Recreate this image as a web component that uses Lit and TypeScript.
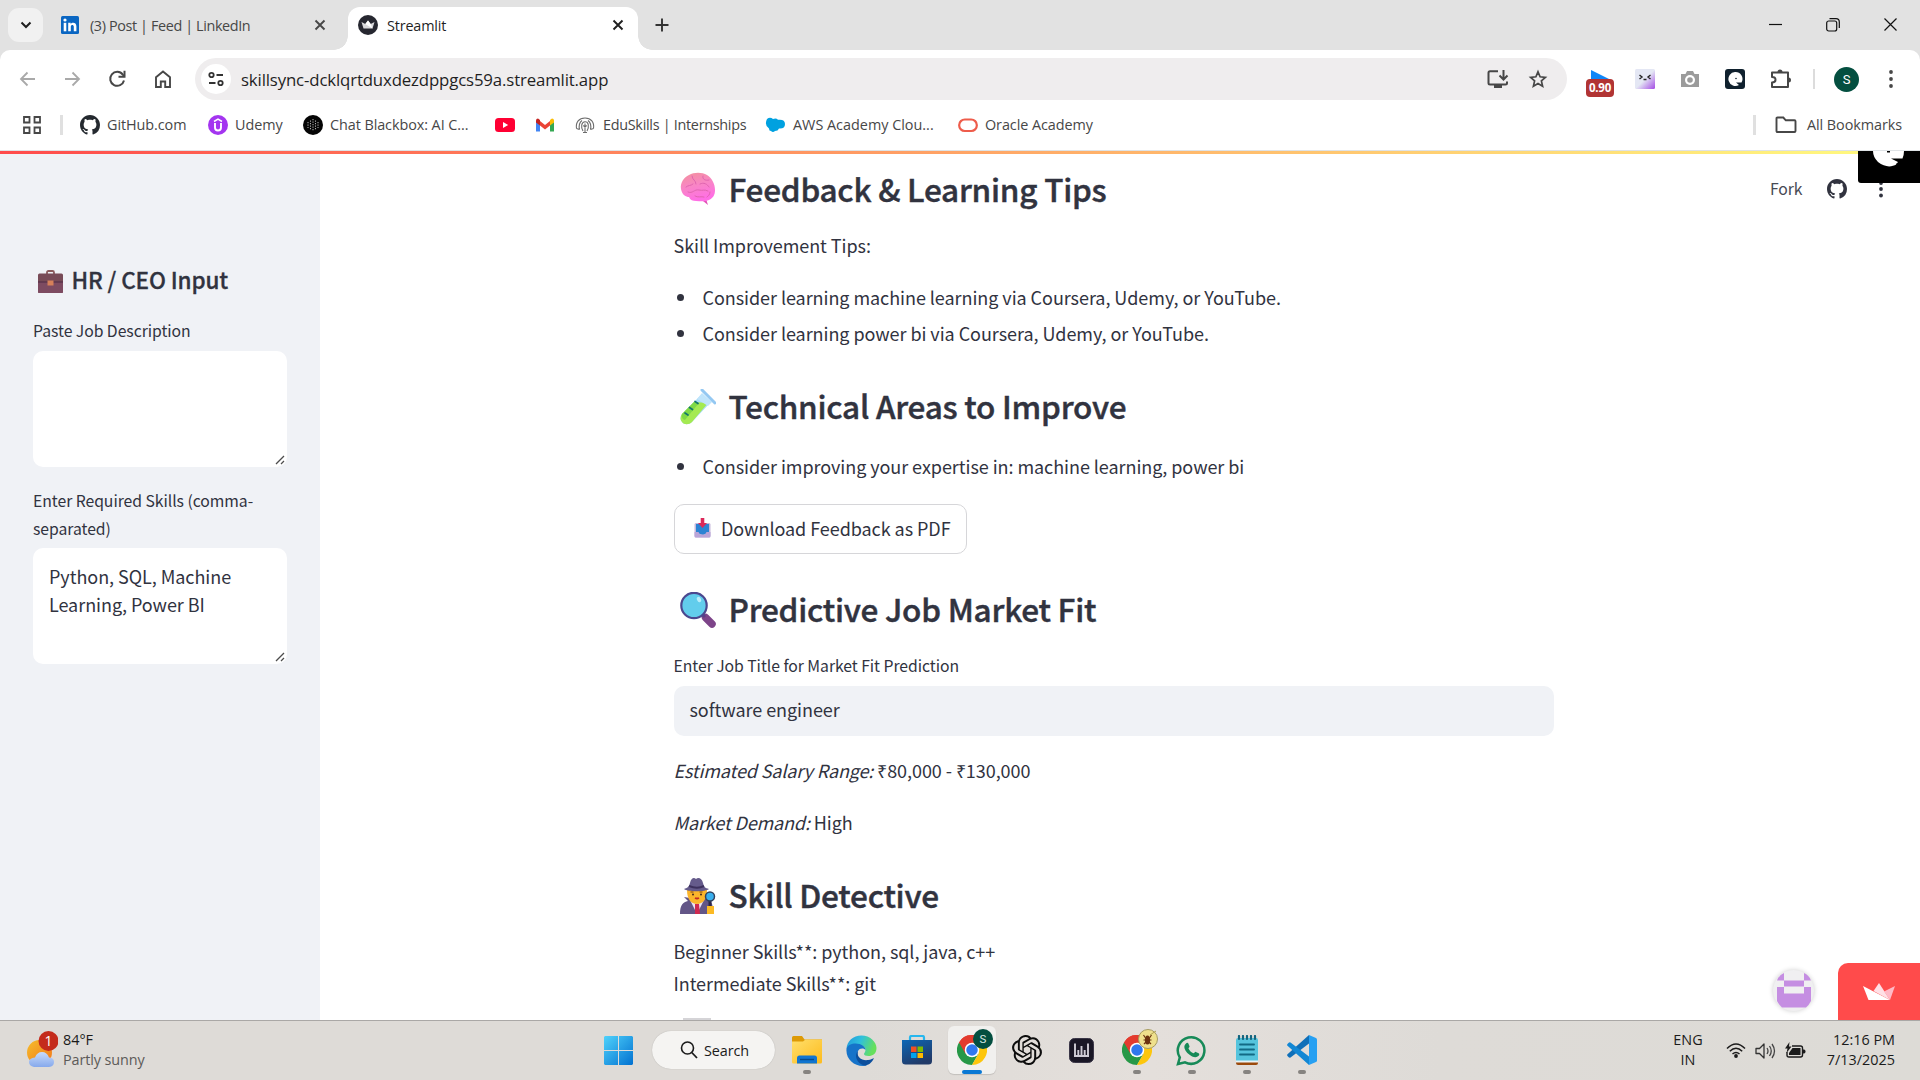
import { LitElement, html, svg, css } from 'lit';
import { customElement } from 'lit/decorators.js';

const icon = (w: number, h: number, box: string, body: unknown) =>
  html`<svg class="ic" width=${w} height=${h} viewBox=${box} fill="none">${body}</svg>`;

const OCTOCAT =
  'M8 0C3.58 0 0 3.58 0 8c0 3.54 2.29 6.53 5.47 7.59.4.07.55-.17.55-.38 0-.19-.01-.82-.01-1.49-2.01.37-2.53-.49-2.69-.94-.09-.23-.48-.94-.82-1.13-.28-.15-.68-.52-.01-.53.63-.01 1.08.58 1.23.82.72 1.21 1.87.87 2.33.66.07-.52.28-.87.51-1.07-1.78-.2-3.64-.89-3.64-3.95 0-.87.31-1.59.82-2.15-.08-.2-.36-1.02.08-2.12 0 0 .67-.21 2.2.82.64-.18 1.32-.27 2-.27s1.36.09 2 .27c1.53-1.04 2.2-.82 2.2-.82.44 1.1.16 1.92.08 2.12.51.56.82 1.27.82 2.15 0 3.07-1.87 3.75-3.65 3.95.29.25.54.73.54 1.48 0 1.07-.01 1.93-.01 2.2 0 .21.15.46.55.38A8.01 8.01 0 0 0 16 8c0-4.42-3.58-8-8-8z';
const OPENAI =
  'M22.2819 9.8211a5.9847 5.9847 0 0 0-.5157-4.9108 6.0462 6.0462 0 0 0-6.5098-2.9A6.0651 6.0651 0 0 0 4.9807 4.1818a5.9847 5.9847 0 0 0-3.9977 2.9 6.0462 6.0462 0 0 0 .7427 7.0966 5.98 5.98 0 0 0 .511 4.9107 6.051 6.051 0 0 0 6.5146 2.9001A5.9847 5.9847 0 0 0 13.2599 24a6.0557 6.0557 0 0 0 5.7718-4.2058 5.9894 5.9894 0 0 0 3.9977-2.9001 6.0557 6.0557 0 0 0-.7475-7.0729zm-9.022 12.6081a4.4755 4.4755 0 0 1-2.8764-1.0408l.1419-.0804 4.7783-2.7582a.7948.7948 0 0 0 .3927-.6813v-6.7369l2.02 1.1686a.071.071 0 0 1 .038.052v5.5826a4.504 4.504 0 0 1-4.4945 4.4944zm-9.6607-4.1254a4.4708 4.4708 0 0 1-.5346-3.0137l.142.0852 4.783 2.7582a.7712.7712 0 0 0 .7806 0l5.8428-3.3685v2.3324a.0804.0804 0 0 1-.0332.0615L9.74 19.9502a4.4992 4.4992 0 0 1-6.1408-1.6464zM2.3408 7.8956a4.485 4.485 0 0 1 2.3655-1.9728V11.6a.7664.7664 0 0 0 .3879.6765l5.8144 3.3543-2.0201 1.1685a.0757.0757 0 0 1-.071 0l-4.8303-2.7865A4.504 4.504 0 0 1 2.3408 7.872zm16.5963 3.8558L13.1038 8.364 15.1192 7.2a.0757.0757 0 0 1 .071 0l4.8303 2.7913a4.4944 4.4944 0 0 1-.6765 8.1042v-5.6772a.79.79 0 0 0-.407-.667zm2.0107-3.0231l-.142-.0852-4.7735-2.7818a.7759.7759 0 0 0-.7854 0L9.409 9.2297V6.8974a.0662.0662 0 0 1 .0284-.0615l4.8303-2.7866a4.4992 4.4992 0 0 1 6.6802 4.66zM8.3065 12.863l-2.02-1.1638a.0804.0804 0 0 1-.038-.0567V6.0742a4.4992 4.4992 0 0 1 7.3757-3.4537l-.142.0805L8.704 5.459a.7948.7948 0 0 0-.3927.6813zm1.0976-2.3654l2.602-1.4998 2.6069 1.4998v2.9994l-2.5974 1.4997-2.6067-1.4997Z';

const close = (c: string) => icon(12, 12, '0 0 12 12', svg`<path d="M1.5 1.5l9 9M10.5 1.5l-9 9" stroke=${c} stroke-width="1.9"/>`);

const github = (s: number, c: string) => icon(s, s, '0 0 16 16', svg`<path fill=${c} d=${OCTOCAT}/>`);

const chrome = () => icon(30, 30, '0 0 48 48', svg`
  <path d="M24 24L3.2 12A24 24 0 0 1 44.8 12z" fill="#e33b2e"/>
  <path d="M3.2 12A24 24 0 0 0 24 48L34.4 30 24 24z" fill="#279847"/>
  <path d="M44.8 12A24 24 0 0 1 24 48L34.4 30 24 12z" fill="#fdc60c"/>
  <path d="M3.2 12L13.6 30 24 24V12h20.8A24 24 0 0 0 3.2 12z" fill="#e33b2e"/>
  <circle cx="24" cy="24" r="11.6" fill="#fff"/><circle cx="24" cy="24" r="9.2" fill="#3078ee"/>`);

const brain = () => icon(36, 34, '0 0 36 34', svg`
  <defs><linearGradient id="br" x1="0" y1="0" x2=".3" y2="1"><stop offset="0" stop-color="#f3929c"/><stop offset=".5" stop-color="#f886c4"/><stop offset="1" stop-color="#ff6fe4"/></linearGradient></defs>
  <path d="M26 27l2 6-5-4z" fill="#e250b8"/>
  <path d="M1 17c-1-6 3-12 8-14C14 0 22 0 27 3c5 3 8 9 8 15 0 5-2 8-6 10-4 2-9 1-13 1-3 0-6-1-7-4-3 0-7-2-8-8z" fill="url(#br)"/>
  <path d="M6 15c2-2 5-1 7-3M12 4c0 4 4 4 4 8M23 4c-1 3 2 5 6 4M20 12c4-2 7 0 9 3M8 20c5 2 6-3 11-2 4 1 5-1 9 1M15 24c3 2 6 0 9 1M30 20c0 3-2 4-3 5" stroke="#e065b0" stroke-width="1" stroke-linecap="round"/>`);

const tube = () => icon(36, 36, '0 0 36 36', svg`
  <path d="M20 7l9 8-17 18c-3 3-8 3-10 0-2-2-2-5 0-8z" fill="#a9dcf7"/>
  <path d="M14 13l14 1L12 33c-3 3-8 3-10 0-2-2-2-5 0-8z" fill="#a4ea52"/>
  <path d="M14 13l5 1L5 31c-2 0-4-3-3-6z" fill="#7fd946"/>
  <path d="M22 4l10 9-4 4-11-7z" fill="#bfe4fb"/>
  <path d="M22 1l13 13" stroke="#94c8f2" stroke-width="3" stroke-linecap="round"/>
  <path d="M15 12.500l3 2M9.500 18.500l3 2M5 24l3 2" stroke="#14756d" stroke-width="1.700" stroke-linecap="round"/>`);

const magnifier = () => icon(36, 36, '0 0 36 36', svg`
  <path d="M25.500 25.500l6.500 6.500" stroke="#7d4489" stroke-width="7.500" stroke-linecap="round"/>
  <path d="M21 21l4 4" stroke="#5c3c86" stroke-width="3"/>
  <circle cx="14" cy="13.500" r="12.700" fill="#62cdec" stroke="#4b488f" stroke-width="2.200"/>
  <ellipse cx="19" cy="7.500" rx="2" ry="2.800" fill="#b9eefb" transform="rotate(-25 19 7.500)"/>`);

const detective = () => icon(36, 36, '0 0 36 36', svg`
  <path d="M0 36c0-9 3-12 8-13l-4-4 6 1h14l6 3c3 2 3 8 3 13z" fill="#635687"/>
  <path d="M10 22l7 14 7-14z" fill="#e9e3f4"/><path d="M15 26h4l1 10h-5z" fill="#cf2950"/>
  <path d="M7 12h20c0 9-4 14-10 14S7 21 7 12z" fill="#fbb52b"/>
  <path d="M4 11c3-1 5-2 6-6 1-5 4-6 6-4 2-2 6-1 7 4 1 4 2 5 6 6-3 3-22 3-25 0z" fill="#655b8b"/>
  <path d="M9 8c5 2 11 2 15 0" stroke="#3d315d" stroke-width="2"/>
  <path d="M10.500 14h3M19.500 14h3" stroke="#7b4516" stroke-width="1.200"/><circle cx="13" cy="16.500" r="1" fill="#43281e"/><circle cx="21" cy="16.500" r="1" fill="#43281e"/>
  <path d="M15 20q2 1 4 0" stroke="#c22a25" stroke-width="1.800"/>
  <path d="M30 22v7" stroke="#2e2848" stroke-width="3"/><circle cx="30" cy="18.500" r="4.500" fill="#39afee" stroke="#30415e" stroke-width="1.500"/>
  <path d="M27 28h7v8h-7z" fill="#fcba24"/>`);

const briefcase = () => icon(25, 24, '0 0 25 24', svg`
  <path d="M9 4V2.500q0-1.500 1.500-1.500h4q1.500 0 1.500 1.500V4" stroke="#8a5a5c" stroke-width="1.800"/>
  <rect x="0" y="3.500" width="25" height="19.500" rx="1.500" fill="#784b57"/><path d="M0 12h25v10q0 1-1 1H1q-1 0-1-1z" fill="#7d4b61"/>
  <path d="M0 12h25" stroke="#562f49" stroke-width="1.200"/><rect x="9.500" y="10.500" width="6" height="5" fill="#d6805a"/>`);

const inbox = () => icon(17, 20, '0 0 17 20', svg`
  <rect x=".5" y="5" width="16" height="14.500" rx="1.500" fill="#c7b9dc"/><path d="M2 6h13v9l-4 1-2 1-3-1-4-1z" fill="#2c83d3"/>
  <path d="M.5 14h4l1.500 2.500h5L12.500 14h4v4q0 1.500-1.500 1.500H2Q.5 19.500.5 18z" fill="#baa5d8"/>
  <path d="M6.700 0h3.600v5h2.700l-4.500 5L4 5h2.700z" fill="#dc2859"/>`);

const grip = () => icon(10, 10, '0 0 10 10', svg`<path d="M1 9l8-8M6 9l3-3" stroke="#4c4c4c" stroke-width="1.300"/>`);

@customElement('app-root')
export class AppRoot extends LitElement {
  static styles = css`
    :host { display: flex; flex-direction: column; width: 1920px; height: 1080px; overflow: hidden; background: #fff; font: 14.4px/20px 'Open Sans', sans-serif; color: #474747; white-space: nowrap; }
    * { box-sizing: border-box; }
    .ic { display: block; flex: none; }
    p, h1, h2, ul { margin: 0; padding: 0; }

    .tabs { display: flex; height: 50px; background: #e2e2e2; align-items: center; flex: none; }
    .tabsearch { width: 35px; height: 34px; margin-left: 8px; border-radius: 11px; background: #f1f1f1; display: grid; place-items: center; }
    .tab { display: flex; align-items: center; height: 43px; margin-top: 7px; }
    .tab .t { padding-top: 1px; }
    .tab.idle { width: 293px; padding: 0 10px 7px 18px; }
    .tab.idle .t { margin-left: 11px; width: 224px; letter-spacing: -.38px; }
    .tab.active { position: relative; width: 290px; margin-left: 12px; background: #fff; border-radius: 12px 12px 0 0; color: #1f1f1f; padding: 0 14px 7px 10px; }
    .tab.active .t { margin-left: 9px; width: 225px; letter-spacing: -.16px; }
    .tab.active::before, .tab.active::after { content: ''; position: absolute; bottom: 0; width: 14px; height: 14px; }
    .tab.active::before { left: -14px; background: radial-gradient(circle at 0 0, #e2e2e2 13.5px, #fff 14px); }
    .tab.active::after { right: -14px; background: radial-gradient(circle at 100% 0, #e2e2e2 13.5px, #fff 14px); }
    .plus { margin-left: 17px; }
    .win { margin-left: auto; display: flex; align-items: center; gap: 44px; padding-right: 23px; }
    .win .ic { margin-top: -1px; }

    .toolcap { background: #e2e2e2; flex: none; }
    .toolbar { display: flex; align-items: center; height: 58px; background: #fff; border-radius: 10px 10px 0 0; padding-left: 19px; }
    .nav { display: flex; gap: 26px; width: 176px; align-items: center; }
    .omni { display: flex; align-items: center; width: 1372px; height: 42px; border-radius: 21px; background: #efedee; padding: 0 19px 0 6px; }
    .site { width: 30px; height: 30px; border-radius: 50%; background: #fff; display: grid; place-items: center; }
    .url { flex: 1; margin-left: 10px; padding-top: 2px; font-size: 16.8px; letter-spacing: -.14px; color: #1f1f1f; }
    .omni .star { margin-left: 19px; }
    .ext { display: flex; align-items: center; flex: 1; }
    .ext > .ic { margin-left: 25px; }
    .ext > .ic:nth-of-type(1) { margin-left: 21px; }
    .ext .bar { margin: 0 19px 0 21px; }
    .ext > .ic:last-child { margin-left: 30px; }
    .speed { margin-left: 19px; display: flex; flex-direction: column; align-items: center; width: 28px; height: 27px; margin-top: 9px; }
    .speed b { background: #b13434; color: #fff; font: 700 11.5px/18px 'Open Sans', sans-serif; border-radius: 4px; width: 28px; text-align: center; letter-spacing: -.2px; }
    .bar { width: 2px; height: 20px; background: #dcdcdc; }
    .me { width: 25px; height: 25px; border-radius: 50%; background: #044f40; color: #fff; font: 13px/25px Roboto, sans-serif; text-align: center; }

    .marks { display: flex; align-items: center; height: 43px; flex: none; padding: 0 18px 8px 23px; border-bottom: 1px solid #dfe3e6; letter-spacing: -.07px; }
    .marks .bar { width: 3px; background: #e0e0e0; }
    .marks .lead { margin-left: 19px; }
    .mk { display: flex; align-items: center; gap: 7px; flex: none; }
    .mk .ic { width: 20px; }
    .m1 { width: 128px; margin-left: 17px; }
    .m2 { width: 95px; }
    .m3 { width: 192px; }
    .m4, .m5 { width: 40px; }
    .m6 { width: 190px; letter-spacing: -.29px; gap: 8px; }
    .m7 { width: 193px; letter-spacing: 0; gap: 8px; }
    .m8 { flex: 1; }
    .all { display: flex; align-items: center; gap: 10px; margin-left: 19px; }

    .app { position: relative; display: flex; flex: 1; min-height: 0; overflow: hidden; font-family: 'Noto Sans CJK SC', sans-serif; color: #31333f; }
    .rule { position: absolute; left: 0; top: 0; width: 100%; height: 3px; background: linear-gradient(90deg, #ff4b4b, #fffd80); }
    aside { width: 320px; background: #f0f2f6; padding: 113px 33px 0; }
    aside h1 { display: flex; gap: 8.5px; padding-left: 5px; font-weight: 500; font-size: 22.5px; line-height: 30px; letter-spacing: -.13px; -webkit-text-stroke: .3px #31333f; }
    aside h1 svg { margin-top: 6px; }
    .lab { font-size: 15.75px; line-height: 28px; letter-spacing: -.045px; white-space: normal; }
    aside .lab { margin-top: 23px; }
    aside .lab.two { margin-top: 20px; }
    .area { display: flex; width: 254px; height: 116px; margin-top: 6px; border-radius: 10px; background: #fff; padding: 14px 2px 2px 16px; font-size: 18px; line-height: 28px; letter-spacing: -.05px; }
    .area.b { margin-top: 5px; }
    .area span { flex: 1; white-space: pre-line; }
    .area .ic { align-self: flex-end; }

    main { margin-left: 354px; width: 880px; padding-top: 16px; display: flex; flex-direction: column; font-size: 18px; line-height: 32px; letter-spacing: -.055px; }
    main h2 { display: flex; gap: 12.5px; padding-left: 6px; font-weight: 500; font-size: 31.5px; line-height: 42px; letter-spacing: -.23px; -webkit-text-stroke: .45px #31333f; }
    main h2 svg { margin-top: 5px; }
    main p, li { text-indent: -.5px; }
    .p1 { margin-top: 20px; }
    ul { list-style: none; }
    li { display: flex; align-items: center; line-height: 36px; }
    li::before { content: ''; width: 7px; height: 7px; border-radius: 50%; background: #31333f; margin: 0 19px 0 3px; }
    .l1 { margin-top: 18px; }
    .l2 { margin-top: 22px; }
    .h2 { margin-top: 33px; }
    .btn { display: flex; align-items: center; gap: 10px; width: 293px; height: 50px; margin-top: 20px; border: 1px solid #d6d6d9; border-radius: 10px; padding: 0 0 3px 19px; }
    .h3 { margin-top: 33px; }
    main .lab { margin-top: 23px; }
    .field { height: 50px; margin-top: 6px; border-radius: 10px; background: #f0f2f6; padding-left: 15.5px; line-height: 46px; }
    .p2 { margin-top: 18px; }
    .p3 { margin-top: 20px; }
    .h4 { margin-top: 35px; }
    em { letter-spacing: -.14px; }
    .next { width: 28px; height: 2px; background: #d5d4d7; margin: 19px 0 0 9px; flex: none; }
    .fork { display: flex; align-items: center; margin: 26px 0 0 216px; height: 24px; font-size: 15.75px; letter-spacing: -.15px; gap: 25px; color: #484a55; }
    .fork .dots { margin-left: 7px; }
    .patch { position: absolute; right: 0; top: 0; }
    .host { position: absolute; right: 0; bottom: 0; display: flex; align-items: center; }
    .bubble { width: 41px; height: 41px; border-radius: 50%; background: #f0eff1; box-shadow: 0 0 5px #0003; margin-right: 24px; margin-bottom: 2px; display: grid; place-items: center; }
    .crown { width: 82px; height: 57px; background: #ff4b4b; border-radius: 10px 0 0 0; display: grid; place-items: center; }

    .task { display: flex; flex: none; height: 60px; border-top: 1px solid #aaa8a6; background: linear-gradient(90deg, #dedbd7 0, #dedbd7 45%, #e4dfdb 60%, #dedbd7 75%, #dddbd6); color: #1b1b1b; align-items: center; }
    .weather { display: flex; width: 604px; padding-left: 26px; gap: 5px; padding-bottom: 1px; }
    .weather div { line-height: 20px; margin-top: -1px; }
    .weather span { display: block; color: #5c5a58; letter-spacing: -.1px; }
    .search { display: flex; align-items: center; gap: 6px; width: 123px; height: 38px; margin-left: 19px; border-radius: 19px; background: #f5f4f2; padding-left: 28px; box-shadow: 0 0 1px #0004; margin: -1px 4px 0 19px; letter-spacing: -.1px; }
    .search span { padding-top: 1px; }
    .cell { position: relative; width: 55px; height: 59px; display: grid; place-items: center; padding-bottom: 1px; }
    .cell.on::before { content: ''; position: absolute; left: 4px; top: 5px; width: 48px; height: 48px; border-radius: 6px; background: #f1f0ee; box-shadow: 0 1px 1px #0002; }
    .cell .ic { position: relative; }
    .cell.run::after, .cell.on::after { content: ''; position: absolute; left: 24px; top: 49px; width: 8px; height: 4px; border-radius: 2px; background: #868380; }
    .cell.on::after { left: 18px; width: 20px; background: #0a78d4; }
    .cell .bd { position: absolute; left: 29px; top: 8px; }
    .tray { margin-left: auto; display: flex; align-items: center; padding-right: 25px; text-align: right; line-height: 20px; }
    .lang { text-align: center; width: 30px; margin: -1px 23px 0 0; }
    .clock { width: 74px; margin: -2px 0 0 15px; }
    .gap { width: 9px; }
  `;

  private tabs() {
    return html`<div class="tabs">
      <div class="tabsearch">${icon(12, 8, '0 0 12 8', svg`<path d="M1.500 1.500L6 6l4.500-4.500" stroke="#1f1f1f" stroke-width="2"/>`)}</div>
      <div class="tab idle">${icon(18, 18, '0 0 18 18', svg`<rect width="18" height="18" rx="1.500" fill="#0a66c2"/><rect x="2.700" y="6.800" width="2.600" height="8.500" fill="#fff"/><circle cx="4" cy="4" r="1.600" fill="#fff"/><path d="M7.200 15.300V6.800h2.500v1.200c1-1.900 5.700-2.200 5.700 2.200v5.100h-2.600v-4.500c0-2.500-3-2.300-3 0v4.500z" fill="#fff"/>`)}
        <span class="t">(3) Post | Feed | LinkedIn</span>${close('#474747')}</div>
      <div class="tab active">${icon(20, 20, '0 0 20 20', svg`<circle cx="10" cy="10" r="10" fill="#262730"/><path d="M3.500 7l3.800 2L10 5.500 12.700 9l3.800-2-2 6.500h-9z" fill="#d9d9dc"/><path d="M10 5.500L12.700 9l1.800 4.500L7.300 9z" fill="#fff"/>`)}
        <span class="t">Streamlit</span>${close('#1f1f1f')}</div>
      <div class="plus">${icon(14, 14, '0 0 14 14', svg`<path d="M7 .500v13M.500 7h13" stroke="#333" stroke-width="1.900"/>`)}</div>
      <div class="win">
        ${icon(13, 13, '0 0 13 13', svg`<path d="M0 6.500h13" stroke="#111" stroke-width="1.200"/>`)}
        ${icon(14, 14, '0 0 14 14', svg`<rect x=".700" y="3" width="10" height="10" rx="2" stroke="#111" stroke-width="1.200"/><path d="M3.500.700H10Q13.300.700 13.300 4v6" stroke="#111" stroke-width="1.200"/>`)}
        ${icon(13, 13, '0 0 13 13', svg`<path d="M.500.500l12 12M12.500.500l-12 12" stroke="#111" stroke-width="1.200"/>`)}
      </div></div>`;
  }

  private toolbar() {
    return html`<div class="toolcap"><div class="toolbar">
      <div class="nav">
        ${icon(18, 16, '0 0 18 16', svg`<path d="M16 8H2.500M8.500 1.500L2 8l6.500 6.500" stroke="#a9a9a9" stroke-width="1.800"/>`)}
        ${icon(18, 16, '0 0 18 16', svg`<path d="M2 8h13.500M9.500 1.500L16 8l-6.500 6.500" stroke="#a9a9a9" stroke-width="1.800"/>`)}
        ${icon(20, 20, '0 0 20 20', svg`<path d="M17 11.500A7 7 0 1 1 15.800 5.600L17.500 7.500" stroke="#474747" stroke-width="2"/><path d="M17.500 1.700v6h-6" stroke="#474747" stroke-width="2"/>`)}
        ${icon(20, 20, '0 0 20 20', svg`<path d="M3 8.200L10 2.500l7 5.700V18h-4.800v-5.500H7.800V18H3z" stroke="#474747" stroke-width="1.900"/>`)}
      </div>
      <div class="omni">
        <div class="site">${icon(16, 16, '0 0 16 16', svg`<circle cx="3.500" cy="4" r="2.200" stroke="#333" stroke-width="1.800"/><path d="M8.500 4H15M1 12h6.500" stroke="#333" stroke-width="1.800"/><circle cx="12.500" cy="12" r="2.200" stroke="#333" stroke-width="1.800"/>`)}</div>
        <span class="url">skillsync-dcklqrtduxdezdppgcs59a.streamlit.app</span>
        ${icon(22, 20, '0 0 22 20', svg`<path d="M11 2.200H3Q1.500 2.200 1.500 3.700V14q0 1.500 1.500 1.500h15.500q1.500 0 1.500-1.500v-1.500" stroke="#474747" stroke-width="2"/><path d="M7 17.500h8" stroke="#474747" stroke-width="3"/><path d="M16.500 1v9M12.500 6.500l4 4 4-4" stroke="#474747" stroke-width="2"/>`)}
        <span class="star">${icon(20, 20, '0 0 20 20', svg`<path d="M10 2.800l2.100 5 5.300.5-4 3.600 1.200 5.300L10 14.400l-4.600 2.800 1.200-5.300-4-3.600 5.300-.5z" stroke="#474747" stroke-width="1.700"/>`)}</span>
      </div>
      <div class="ext">
        <div class="speed">${icon(18, 9, '0 0 18 9', svg`<path d="M0 0l18 9H0z" fill="#0f87f8"/>`)}<b>0.90</b></div>
        ${icon(20, 20, '0 0 20 20', svg`<defs><linearGradient id="pu" x1="0" y1="0" x2="1" y2="1"><stop offset=".5" stop-color="#e4e7f4"/><stop offset="1" stop-color="#a44be4"/></linearGradient></defs><rect width="20" height="20" rx="1.500" fill="url(#pu)"/><path d="M4.500 6l2.500 2-2.500 2M15.500 6L13 8l2.500 2M8.500 10.500h3" stroke="#222" stroke-width="1.400"/>`)}
        ${icon(20, 20, '0 0 20 20', svg`<path d="M1 5h4.500L7 2h6l1.500 3H19v13H1z" fill="#9b9b9b"/><circle cx="10" cy="11" r="5" fill="#fff"/><circle cx="10" cy="11" r="2.800" fill="#9b9b9b"/>`)}
        ${icon(20, 20, '0 0 20 20', svg`<rect width="20" height="20" rx="3" fill="#10212e"/><path d="M10 3a7 7 0 1 0 4 13l-3-2.500h5.500A7 7 0 0 0 10 3z" fill="#fff"/><circle cx="11" cy="9.500" r=".8" fill="#10212e"/>`)}
        ${icon(22, 22, '0 0 22 22', svg`<path d="M2 4.500h16v14.500H2v-4.500q3.500 0 3.500-2.800T2 9z" stroke="#474747" stroke-width="2" stroke-linejoin="round"/><path d="M7.500 4a2.500 2.500 0 0 1 5 0M18.500 9.500a2.500 2.500 0 0 1 0 5" fill="#474747"/>`)}
        <i class="bar"></i><div class="me">S</div>
        ${icon(4, 18, '0 0 4 18', svg`<circle cx="2" cy="2" r="1.900" fill="#474747"/><circle cx="2" cy="9" r="1.900" fill="#474747"/><circle cx="2" cy="16" r="1.900" fill="#474747"/>`)}
      </div></div></div>`;
  }

  private bookmarks() {
    return html`<div class="marks">
      ${icon(18, 18, '0 0 18 18', svg`<path d="M1 1h5.500v5.500H1zM11.500 1H17v5.500h-5.500zM1 11.500h5.500V17H1zM11.500 11.500H17V17h-5.500z" stroke="#474747" stroke-width="1.800"/>`)}
      <i class="bar lead"></i>
      <div class="mk m1">${github(20, '#24292f')}<span>GitHub.com</span></div>
      <div class="mk m2">${icon(20, 20, '0 0 20 20', svg`<circle cx="10" cy="10" r="10" fill="#a435f0"/><path d="M6 6.500l4-2.300 4 2.300" stroke="#fff" stroke-width="1.500"/><path d="M7 8v4.500q0 3 3 3t3-3V8" stroke="#fff" stroke-width="1.900"/>`)}<span>Udemy</span></div>
      <div class="mk m3">${icon(20, 20, '0 0 20 20', svg`<circle cx="10" cy="10" r="10" fill="#050505"/><path d="M10 4v12M7.500 5.500v9M12.500 5.500v9M5 7v6M15 7v6" stroke="#aaa" stroke-width="1.100" stroke-dasharray="1.200 1.300"/>`)}<span>Chat Blackbox: AI C...</span></div>
      <div class="mk m4">${icon(20, 20, '0 0 20 20', svg`<rect y="3" width="20" height="14" rx="3.500" fill="#ff0033"/><path d="M8 7l5.200 3L8 13z" fill="#fff"/>`)}</div>
      <div class="mk m5">${icon(20, 20, '0 0 20 20', svg`<path d="M1 5v11.500h4V9z" fill="#4285f4"/><path d="M19 5v11.500h-4V9z" fill="#34a853"/><path d="M5 6l5 4 5-4v4.500L10 14.500 5 10.500z" fill="#ea4335"/><path d="M1 5.500Q1 3.500 3 3.500L5 5v5.500L1 7.500z" fill="#c5221f"/><path d="M19 5.500q0-2-2-2L15 5v5.500l4-3z" fill="#fbbc04"/>`)}</div>
      <div class="mk m6">${icon(20, 20, '0 0 20 20', svg`<path d="M1.500 13.500C.5 7 4 3 10 3s9.500 4 8.500 10.500M4.500 14.500c-1-4.500 0-7 2.500-9M15.500 14.500c1-4.500 0-7-2.500-9M1.500 13.500l3 1M18.500 13.500l-3 1M8 16C5.500 11.500 6.500 7 10 6.800s4.500 4.700 2 9.200M10 8.500V17M8.300 10.500l1.700 1.500 1.700-1.500M8 17.500h4" stroke="#6c6c6c" stroke-width="1.100"/>`)}<span>EduSkills | Internships</span></div>
      <div class="mk m7">${icon(20, 20, '0 0 20 20', svg`<path d="M2 4q3-2.500 6 0 3-1.500 5 .8 7-.8 7 4.200 0 5-6 4.500-1 2.500-4 2.500-2 2-4 0Q4 16 4 13.500-1 10 2 4z" fill="#00a1e0"/>`)}<span>AWS Academy Clou...</span></div>
      <div class="mk m8">${icon(20, 20, '0 0 20 20', svg`<rect x="1.200" y="4.500" width="17.600" height="11.500" rx="5.600" stroke="#ee5c4b" stroke-width="2.200"/>`)}<span>Oracle Academy</span></div>
      <i class="bar"></i>
      <div class="all">${icon(22, 18, '0 0 22 18', svg`<path d="M1.500 2.500Q1.500 1.500 2.500 1.500h5.800l2.500 2.800h8.700q1 0 1 1v9.700q0 1-1 1h-17q-1 0-1-1z" stroke="#474747" stroke-width="1.900"/>`)}<span>All Bookmarks</span></div>
    </div>`;
  }

  private page() {
    return html`<div class="app">
      <aside>
        <h1>${briefcase()}<span>HR / CEO Input</span></h1>
        <p class="lab">Paste Job Description</p>
        <div class="area"><span></span>${grip()}</div>
        <p class="lab two">Enter Required Skills (comma-separated)</p>
        <div class="area b"><span>Python, SQL, Machine
Learning, Power BI</span>${grip()}</div>
      </aside>
      <main>
        <h2>${brain()}<span>Feedback &amp; Learning Tips</span></h2>
        <p class="p1">Skill Improvement Tips:</p>
        <ul class="l1"><li>Consider learning machine learning via Coursera, Udemy, or YouTube.</li><li>Consider learning power bi via Coursera, Udemy, or YouTube.</li></ul>
        <h2 class="h2">${tube()}<span>Technical Areas to Improve</span></h2>
        <ul class="l2"><li>Consider improving your expertise in: machine learning, power bi</li></ul>
        <div class="btn">${inbox()}<span>Download Feedback as PDF</span></div>
        <h2 class="h3">${magnifier()}<span>Predictive Job Market Fit</span></h2>
        <p class="lab">Enter Job Title for Market Fit Prediction</p>
        <div class="field">software engineer</div>
        <p class="p2"><em>Estimated Salary Range:</em> ₹80,000 - ₹130,000</p>
        <p class="p3"><em>Market Demand:</em> High</p>
        <h2 class="h4">${detective()}<span>Skill Detective</span></h2>
        <p class="p1">Beginner Skills**: python, sql, java, c++</p>
        <p>Intermediate Skills**: git</p>
        <div class="next"></div>
      </main>
      <div class="fork"><span>Fork</span>${github(20, '#31333f')}<span class="dots">${icon(4, 18, '0 0 4 18', svg`<circle cx="2" cy="3" r="1.900" fill="#31333f"/><circle cx="2" cy="9" r="1.900" fill="#31333f"/><circle cx="2" cy="15.500" r="1.900" fill="#31333f"/>`)}</span></div>
      <div class="rule"></div>
      <div class="patch">${icon(62, 32, '0 0 62 32', svg`<path d="M0 0h62v32H3q-3 0-3-3z" fill="#000"/><path d="M15 0h31q0 4-1.500 7.500H33l7 3.500q-1 1.500-2 1.800 1 1-3 2Q28 17 20 11q-5-5-5-11z" fill="#fff"/><path d="M29 0h3v1.500h-3z" fill="#000"/>`)}</div>
      <div class="host">
        <div class="bubble">${icon(34, 35, '0 0 34 35', svg`<path d="M0 7.500Q2 2 7 0v7.500zM34 7.500Q32 2 27 0v7.500zM7 7.500h20v6H7zM0 14h7v6.500h20V14h7v14q-2 4-5 6.500H5Q2 32 0 28z" fill="#c58ee2"/>`)}</div>
        <div class="crown">${icon(32, 18, '0 0 32 18', svg`<path d="M0 3l27 14H5.500z" fill="#fff"/><path d="M16 0l-5.500 8L27 17z" fill="#ffe0e6"/><path d="M32 3l-11 5.500 6 8.500z" fill="#ffb9c6"/>`)}</div>
      </div>
    </div>`;
  }

  private taskbar() {
    return html`<div class="task">
      <div class="weather">
        ${icon(32, 38, '0 0 32 38', svg`<defs><linearGradient id="sun" x1="0" y1="0" x2="1" y2="1"><stop offset="0" stop-color="#f6bd2c"/><stop offset="1" stop-color="#f2761b"/></linearGradient><linearGradient id="cl" x1="0" y1="0" x2="0" y2="1"><stop offset="0" stop-color="#c9dcfa"/><stop offset="1" stop-color="#86a9ec"/></linearGradient></defs><circle cx="13.500" cy="21.500" r="12.500" fill="url(#sun)"/><path d="M8 36q-5-1-5-5T9 26.500q2-5.500 7-5.500t7 5.500q5 0 5 4.500t-5 5z" fill="url(#cl)"/><circle cx="22.500" cy="10" r="10" fill="#c42b1c"/><text x="22.500" y="15" font-family="Open Sans" font-size="14" fill="#fff" text-anchor="middle">1</text>`)}
        <div>84°F<span>Partly sunny</span></div>
      </div>
      ${icon(29, 29, '0 0 29 29', svg`<defs><linearGradient id="w" x1="0" y1="0" x2="1" y2="1"><stop offset="0" stop-color="#4fd2fb"/><stop offset="1" stop-color="#0271d0"/></linearGradient></defs><path d="M1 0h13v14H0V1zM15 0h13l1 1v13H15zM0 15h14v14H1l-1-1zM15 15h14v13l-1 1H15z" fill="url(#w)"/>`)}
      <div class="search">${icon(18, 18, '0 0 18 18', svg`<circle cx="7.500" cy="7" r="6" stroke="#1b1b1b" stroke-width="1.600"/><path d="M11.800 11.500l5.200 5.500" stroke="#1b1b1b" stroke-width="1.800"/>`)}<span>Search</span></div>
      <div class="cell run">${icon(30, 28, '0 0 30 28', svg`<path d="M0 1.500Q0 0 1.500 0H10l2.500 3.500H30V14H0z" fill="#dd9a06"/><defs><linearGradient id="fo" x1="0" y1="0" x2="1" y2="1"><stop offset="0" stop-color="#ffdf6b"/><stop offset="1" stop-color="#fdbb1d"/></linearGradient></defs><path d="M0 5.500h11L13.500 3.500H30V26q0 1.500-1.500 1.500h-27Q0 27.500 0 26z" fill="url(#fo)"/><path d="M5 27.500V22q0-2.500 2.500-2.500h15Q25 19.500 25 22v5.500z" fill="#1175d0"/><path d="M8 23.500h14" stroke="#064a8c" stroke-width="1.400"/>`)}</div>
      <div class="cell">${icon(31, 31, '0 0 31 31', svg`<defs><linearGradient id="e1" x1="0" y1="0" x2="1" y2=".3"><stop offset="0" stop-color="#2196dc"/><stop offset=".5" stop-color="#2fc0dc"/><stop offset="1" stop-color="#66e05c"/></linearGradient></defs><path d="M.500 14C1 6 7 .500 15.500.500S30.500 7 30.500 13s-4 8-8 8c-3 0-4.500-1-4.500-2 0-1 1.500-2 1.500-4 0-3-3-5-7-5-5 0-10 1-12 4z" fill="url(#e1)"/><path d="M.500 14c1-4 5-5.500 9-5.500 6 0 10 3 10 6.500-1-2-6-2.500-7.500 1-2 5 2 12 9 14.500C10 33-.500 25 .500 14z" fill="#1673c9"/><path d="M12 16c-2 6 4 10 10 9 3-.3 5-1.500 6-2-2 5-6 7.500-10 7.500C10 28 8 20 12 16z" fill="#0c4f9d"/>`)}</div>
      <div class="cell">${icon(30, 30, '0 0 30 30', svg`<path d="M8 6V2.500Q8 1 9.500 1h11Q22 1 22 2.500V6" stroke="#27b7ee" stroke-width="2.200"/><defs><linearGradient id="st" x1="0" y1="0" x2=".5" y2="1"><stop offset="0" stop-color="#0c67b6"/><stop offset="1" stop-color="#213a68"/></linearGradient></defs><path d="M0 5h30v21q0 3.500-3.500 3.500h-23Q0 29.500 0 26z" fill="url(#st)"/><path d="M9 11.500h5.500V17H9z" fill="#f25022"/><path d="M15.500 11.500H21V17h-5.500z" fill="#7fba00"/><path d="M9 18h5.500v5H9z" fill="#00a4ef"/><path d="M15.500 18H21v5h-5.500z" fill="#ffb900"/>`)}</div>
      <div class="cell on">${chrome()}<span class="bd">${icon(20, 20, '0 0 20 20', svg`<circle cx="10" cy="10" r="10" fill="#044f40"/><text x="10" y="14.200" font-family="Roboto" font-size="11.500" fill="#d8e7e3" text-anchor="middle">S</text>`)}</span></div>
      <div class="cell">${icon(30, 30, '0 0 24 24', svg`<path fill="#0d0d0d" d=${OPENAI}/>`)}</div>
      <div class="cell">${icon(25, 25, '0 0 25 25', svg`<rect x=".500" y=".500" width="24" height="24" rx="5" fill="#1a1726" stroke="#3a3647"/><path d="M6 5.500V19M9.300 12v7M12.500 8v11M15.700 12v7M19 5.500V19M5 18h15" stroke="#cfccd6" stroke-width="1.900"/>`)}</div>
      <div class="cell run">${chrome()}<span class="bd">${icon(20, 20, '0 0 20 20', svg`<circle cx="10" cy="10" r="9.500" fill="#efe08c" stroke="#a79c62"/><path d="M12 6l6-4" stroke="#b1a150"/><ellipse cx="9.500" cy="11" rx="2.600" ry="4.500" fill="#6d3311"/><path d="M5.500 6l2 3M13.500 6l-2 3M5.500 11h8M6 15l2-2M13 15l-2-2" stroke="#6d3311" stroke-width="1.200"/>`)}</span></div>
      <div class="cell run">${icon(31, 31, '0 0 31 31', svg`<path d="M2 29l1.800-6.500A13.300 13.300 0 1 1 9 27.300z" stroke="#178a58" stroke-width="2.500"/><path d="M10 8.500c1-1 2-.8 2.500.2l1 2.500c.3.900-1.200 1.800-1 2.300 1 2.300 2.800 4 5 4.800.7.200 1.500-1.800 2.400-1.400l2.700 1.300c1 .6.800 1.700 0 2.600-1.500 1.700-4 1.700-6.500.6C12.500 19.800 9.500 16.500 8.500 13.300c-.5-2 .2-3.700 1.500-4.800z" fill="#178a58"/>`)}</div>
      <div class="cell run">${icon(24, 30, '0 0 24 30', svg`<path d="M1 27h22v1q0 2-2 2H3q-2 0-2-2z" fill="#9b4a0c"/><path d="M1 5q0-2 2-2h18q2 0 2 2v21H1z" fill="#55c4dd"/><path d="M1 25.500h22v2H1z" fill="#e9f3f6"/><path d="M4 1v3M8 1v3M12 1v3M16 1v3M20 1v3" stroke="#14657f" stroke-width="2.200" stroke-linecap="round"/><path d="M5 9.500h14M5 14.500h14M5 19.500h14" stroke="#126a85" stroke-width="1.900" stroke-linecap="round"/>`)}</div>
      <div class="cell run">${icon(30, 30, '0 0 30 30', svg`<path d="M22 0v8.500L3.500 22.500Q2.500 23 1.700 22.200L.500 21q-.8-.9 0-1.800z" fill="#0f6fb8"/><path d="M22 30v-8.500L3.500 7.500Q2.500 7 1.700 7.800L.500 9q-.8.900 0 1.800z" fill="#1287d4"/><path d="M22 0l7 3q1 .5 1 1.500v21q0 1-1 1.500l-7 3z" fill="#27a0f2"/>`)}</div>
      <div class="tray">
        <div class="lang">ENG<br>IN</div>
        ${icon(20, 15, '0 0 20 15', svg`<path d="M1 5.500q9-9 18 0M3.800 8.300q6.200-6 12.400 0M6.500 11q3.500-3 7 0" stroke="#1b1b1b" stroke-width="1.500"/><circle cx="10" cy="13" r="1.900" fill="#1b1b1b"/>`)}
        <span class="gap"></span>
        ${icon(21, 18, '0 0 21 18', svg`<path d="M1 6.500h3.500L9 2v14l-4.500-4.500H1z" stroke="#333" stroke-width="1.300" stroke-linejoin="round"/><path d="M12 6q2 3 0 6M14.500 4q3.500 5 0 10M17 2q5 7 0 14" stroke="#444" stroke-width="1.300"/>`)}
        <span class="gap"></span>
        ${icon(21, 17, '0 0 21 17', svg`<path d="M7 4h8.500q2 0 2 2v7q0 2-2 2H4q-2 0-2-2v-3" stroke="#1b1b1b" stroke-width="1.400"/><path d="M7.500 6H15.500v7H4V11z" fill="#1b1b1b"/><path d="M18 7.500h1q1.500 0 1.500 2t-1.500 2h-1z" fill="#1b1b1b"/><path d="M4.500 0L0 6.500h2.500L1.500 11 6.500 4.500H4z" fill="#1b1b1b"/>`)}
        <div class="clock">12:16 PM<br>7/13/2025</div>
      </div>
    </div>`;
  }

  render() {
    return html`${this.tabs()}${this.toolbar()}${this.bookmarks()}${this.page()}${this.taskbar()}`;
  }
}
